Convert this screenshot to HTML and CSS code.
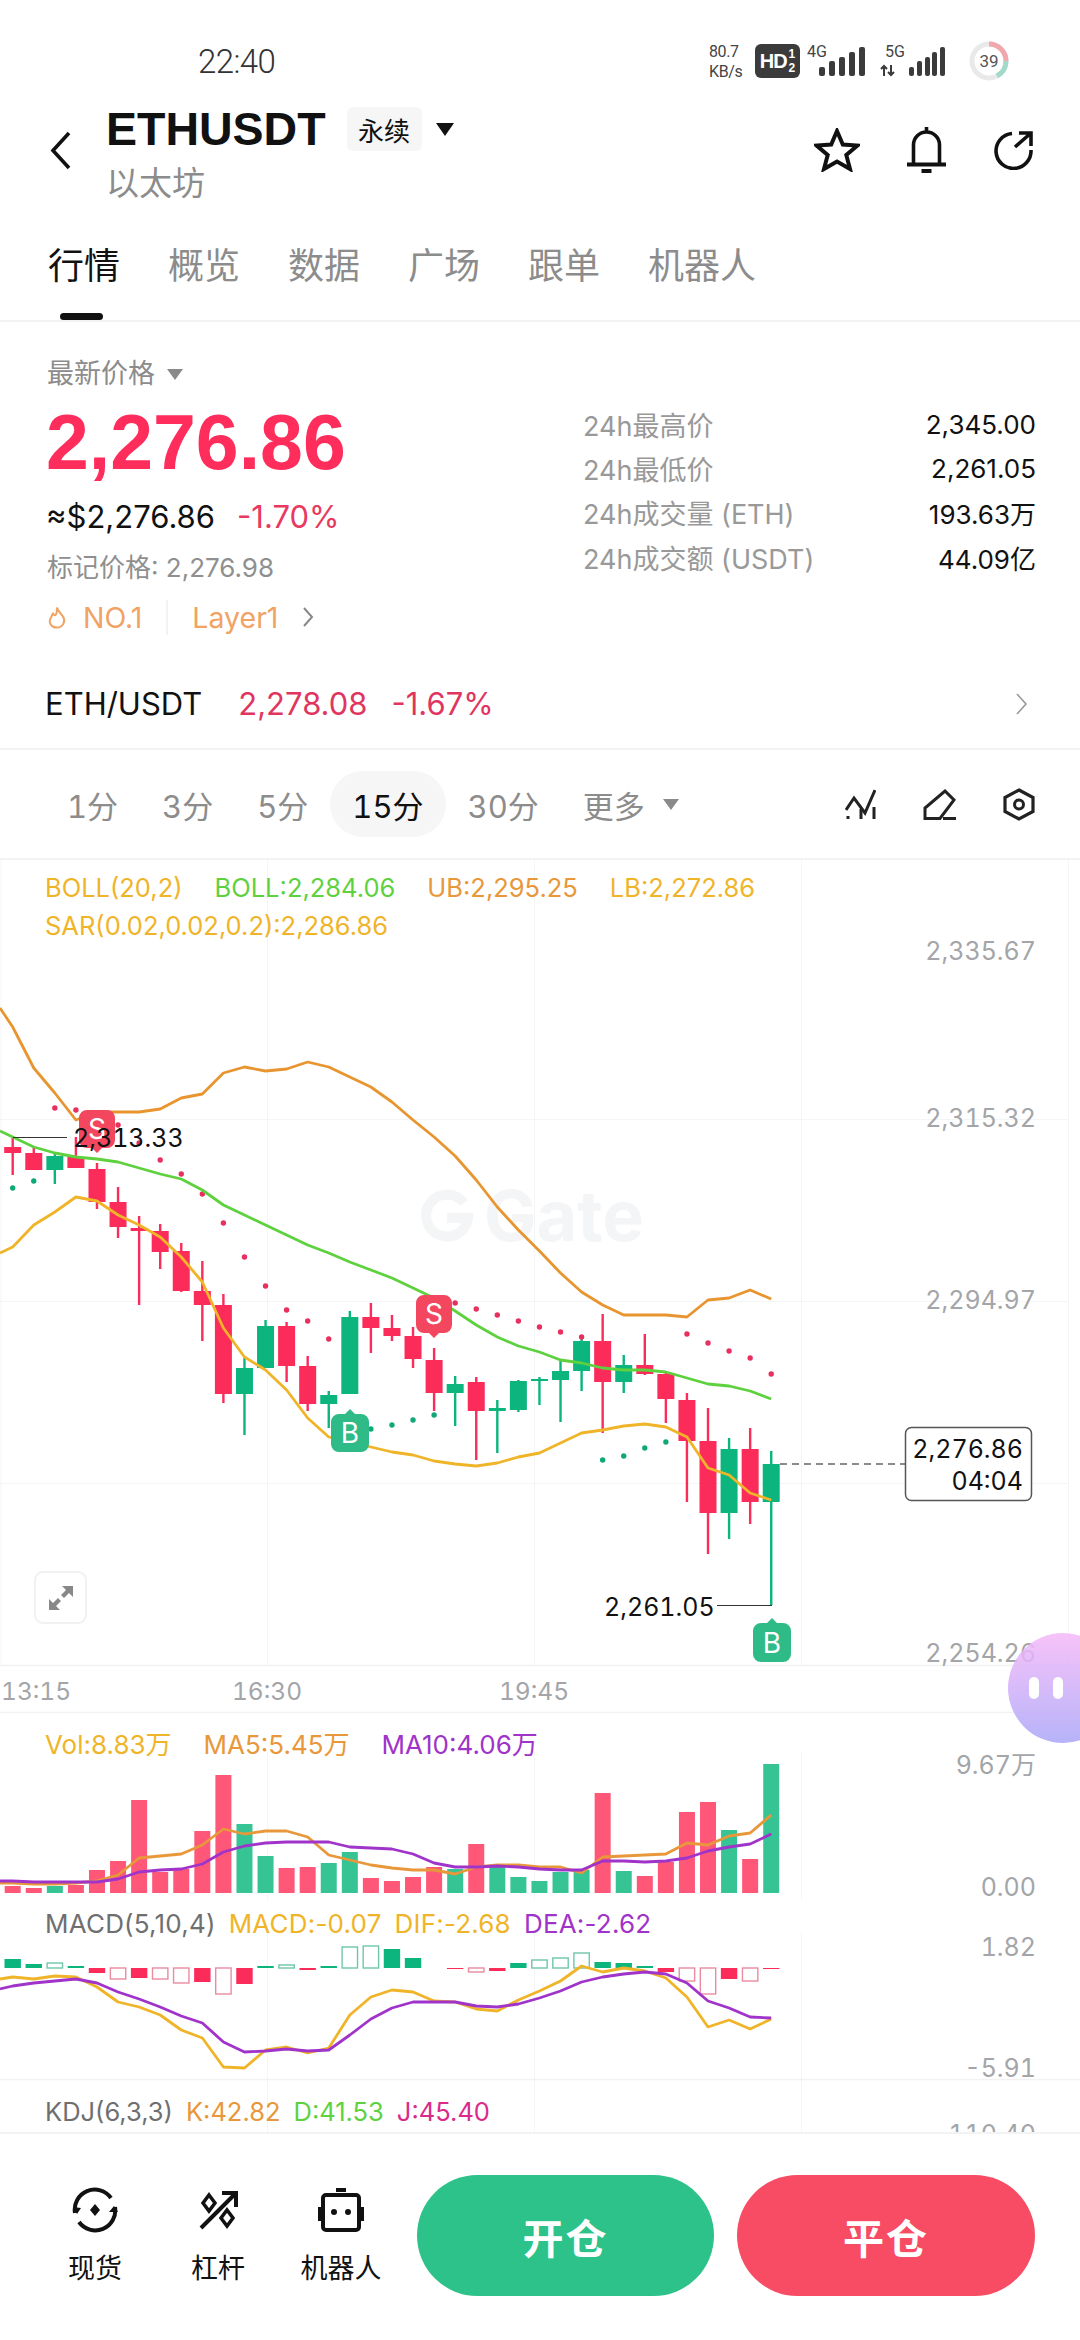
FILE: index.html
```html
<!DOCTYPE html>
<html lang="zh">

<head>
    <meta charset="UTF-8">
    <meta name="viewport" content="width=device-width, initial-scale=1.0">
    <title>ETHUSDT</title>
    <link rel="stylesheet" href="styles.css">
</head>

<body>
    <div class="page">
        <div class="status">
            <div class="time">22:40</div>
            <div class="status-right">
                <div class="speed"><span>80.7</span><span>KB/s</span></div>
                <div class="hd">HD<span class="hd-frac"><span>1</span><span>2</span></span></div>
                <svg class="sig-4g" width="59" height="36" viewBox="0 0 59 36">
                    <text x="0" y="14" class="sig-text">4G</text>
                    <rect x="12" y="24" width="6" height="9" rx="2"/>
                    <rect x="22" y="18" width="6" height="15" rx="2"/>
                    <rect x="32" y="14" width="6" height="19" rx="2"/>
                    <rect x="42" y="9" width="6" height="24" rx="2"/>
                    <rect x="52" y="4" width="6" height="29" rx="2"/>
                </svg>
                <svg class="sig-5g" width="65" height="36" viewBox="0 0 65 36">
                    <text x="5" y="14" class="sig-text">5G</text>
                    <path d="M4 33V23M1 26l3-3 3 3M11 22v10M8 29l3 3 3-3" fill="none" stroke="#3b3b3b" stroke-width="2"/>
                    <rect x="29" y="24" width="5" height="9" rx="2"/>
                    <rect x="37" y="18" width="5" height="15" rx="2"/>
                    <rect x="45" y="14" width="5" height="19" rx="2"/>
                    <rect x="52" y="9" width="5" height="24" rx="2"/>
                    <rect x="60" y="4" width="5" height="29" rx="2"/>
                </svg>
                <svg class="battery" width="40" height="40" viewBox="0 0 40 40">
                    <circle cx="20" cy="20" r="17" fill="none" stroke="#e9e9e9" stroke-width="5"/>
                    <path d="M20 3A17 17 0 0 1 37 20" fill="none" stroke="#f2a7ad" stroke-width="5"/>
                    <path d="M37 20A17 17 0 0 1 28 35" fill="none" stroke="#a3d9cb" stroke-width="5"/>
                    <text x="20" y="26" class="battery-text">39</text>
                </svg>
            </div>
        </div>

        <div class="header">
            <svg class="back" width="21" height="39" viewBox="0 0 21 39">
                <path d="M19 2L3 19.5 19 37" fill="none" stroke="#111" stroke-width="3.6"/>
            </svg>
            <div class="title-block">
                <div class="title-line">
                    <span class="symbol">ETHUSDT</span>
                    <span class="tag">永续</span>
                    <span class="tri tri-black"></span>
                </div>
                <div class="subtitle">以太坊</div>
            </div>
            <div class="actions">
                <svg width="46" height="44" viewBox="0 0 46 44">
                    <path d="M23 3L28.8 16.5 43.5 17.5 32.3 27 36 41 23 33.5 10 41 13.7 27 2.5 17.5 17.2 16.5Z" fill="none" stroke="#111" stroke-width="4"/>
                </svg>
                <svg width="41" height="46" viewBox="0 0 41 46">
                    <path d="M20.5 0v5M7.5 36V18a13 13 0 0 1 26 0v18" fill="none" stroke="#111" stroke-width="3.6"/>
                    <path d="M1 37.5h39" stroke="#111" stroke-width="4"/>
                    <rect x="15.5" y="42" width="10" height="4" fill="#111"/>
                </svg>
                <svg width="41" height="40" viewBox="0 0 41 40">
                    <path d="M19 3.5A17.5 17.5 0 1 0 38 20" fill="none" stroke="#111" stroke-width="3.6"/>
                    <path d="M22 17L38 3M26 3h12v13" fill="none" stroke="#111" stroke-width="3.6"/>
                </svg>
            </div>
        </div>

        <div class="tabs">
            <div class="tab tab-active">行情</div>
            <div class="tab">概览</div>
            <div class="tab">数据</div>
            <div class="tab">广场</div>
            <div class="tab">跟单</div>
            <div class="tab">机器人</div>
        </div>

        <div class="price-panel">
            <div class="price-left">
                <div class="price-label">最新价格<span class="tri tri-grey"></span></div>
                <div class="price-big">2,276.86</div>
                <div class="price-usd">≈$2,276.86<span class="price-change">-1.70%</span></div>
                <div class="price-mark">标记价格: 2,276.98</div>
                <div class="price-tags">
                    <svg width="20" height="23" viewBox="0 0 20 23">
                        <path d="M10 1.5C11 5.5 14 7.5 16 10.5 19 15.5 16 21.5 10 21.5 4 21.5 1 16.5 4 11.5 5 9.5 5 8.5 6 7.5 7 9.5 8 9.5 9 8.5 10 6.5 10 3.5 10 1.5Z" fill="none" stroke="#f0a364" stroke-width="2"/>
                    </svg>
                    <span class="tag-no">NO.1</span>
                    <span class="tag-layer">Layer1</span>
                    <svg width="12" height="20" viewBox="0 0 12 20">
                        <path d="M2 1l8 9-8 9" fill="none" stroke="#888" stroke-width="2"/>
                    </svg>
                </div>
            </div>
            <div class="price-right">
                <div class="stat"><span class="stat-name">24h最高价</span><span class="stat-val">2,345.00</span></div>
                <div class="stat"><span class="stat-name">24h最低价</span><span class="stat-val">2,261.05</span></div>
                <div class="stat"><span class="stat-name">24h成交量 (ETH)</span><span class="stat-val">193.63万</span></div>
                <div class="stat"><span class="stat-name">24h成交额 (USDT)</span><span class="stat-val">44.09亿</span></div>
            </div>
        </div>

        <div class="spot-row">
            <span class="spot-name">ETH/USDT</span>
            <span class="spot-price">2,278.08</span>
            <span class="spot-change">-1.67%</span>
            <svg class="spot-arrow" width="13" height="22" viewBox="0 0 13 22">
                <path d="M2 1l9 10-9 10" fill="none" stroke="#999" stroke-width="1.6"/>
            </svg>
        </div>

        <div class="tools">
            <div class="tf">1分</div>
            <div class="tf">3分</div>
            <div class="tf">5分</div>
            <div class="tf tf-active">15分</div>
            <div class="tf">30分</div>
            <div class="tf tf-more">更多<span class="tri tri-grey"></span></div>
            <div class="tool-icons">
                <svg width="31" height="30" viewBox="0 0 31 30">
                    <path d="M1 21L9 9l11 15L30 1" fill="none" stroke="#222" stroke-width="3"/>
                    <path d="M3 27v3M16 20v10M29 18v12" stroke="#222" stroke-width="3"/>
                </svg>
                <svg width="33" height="31" viewBox="0 0 33 31">
                    <path d="M2 29.5V19L22 2l9 9-14 18.5ZM20 29.5h13" fill="none" stroke="#222" stroke-width="3"/>
                </svg>
                <svg width="32" height="33" viewBox="0 0 32 33">
                    <path d="M16 2L30 9.5V23.5L16 31 2 23.5V9.5Z" fill="none" stroke="#222" stroke-width="3.2"/>
                    <circle cx="16" cy="16.5" r="4.5" fill="none" stroke="#222" stroke-width="3"/>
                </svg>
            </div>
        </div>

        <div class="chart">
            <svg id="chart-svg" class="chart-svg" width="1080" height="1272" viewBox="0 860 1080 1272">
                <g class="grid">
                    <path d="M1 860V1665M267.5 860V1665M534.5 860V1665M801.5 860V1665M1068.5 860V1665"/>
                    <path d="M0 1119.5H1068M0 1301.5H1068M0 1483.5H1068"/>
                    <path d="M267.5 1752V1900M534.5 1752V1900M801.5 1752V1900M267.5 1933V2132M534.5 1933V2132M801.5 1933V2132"/>
                    <path class="grid-strong" d="M0 1665.5H1080M0 1712.5H1080M0 2079.5H1080"/>
                </g>
                <g class="watermark">
                    <path d="M464 1203A21 21 0 1 0 468 1218H447" fill="none" stroke="#f3f5f6" stroke-width="10"/>
                    <text x="484" y="1241" class="watermark-text">Gate</text>
                </g>
                <g id="plot"></g>
                <g class="axis">
                    <text x="1036" y="960">2,335.67</text>
                    <text x="1036" y="1127">2,315.32</text>
                    <text x="1036" y="1309">2,294.97</text>
                    <text x="1036" y="1662">2,254.26</text>
                    <text x="1036" y="1774">9.67万</text>
                    <text x="1036" y="1896">0.00</text>
                    <text x="1036" y="1956">1.82</text>
                    <text x="1036" y="2077">-5.91</text>
                    <text x="1036" y="2143">110.40</text>
                </g>
                <g class="axis-time">
                    <text x="1" y="1700" class="axis-first">13:15</text>
                    <text x="267" y="1700">16:30</text>
                    <text x="534" y="1700">19:45</text>
                </g>
                <g class="badge-sell">
                    <path d="M87 1110h20a8 8 0 0 1 8 8v22a8 8 0 0 1-8 8h-5l-5 5-5-5h-5a8 8 0 0 1-8-8v-22a8 8 0 0 1 8-8Z"/>
                    <text x="97" y="1139">S</text>
                    <path d="M424 1295h20a8 8 0 0 1 8 8v22a8 8 0 0 1-8 8h-5l-5 5-5-5h-5a8 8 0 0 1-8-8v-22a8 8 0 0 1 8-8Z"/>
                    <text x="434" y="1324">S</text>
                </g>
                <g class="badge-buy">
                    <path d="M339 1414h6l5-5 5 5h6a8 8 0 0 1 8 8v22a8 8 0 0 1-8 8h-22a8 8 0 0 1-8-8v-22a8 8 0 0 1 8-8Z"/>
                    <text x="350" y="1443">B</text>
                    <path d="M761 1623h6l5-5 5 5h6a8 8 0 0 1 8 8v23a8 8 0 0 1-8 8h-22a8 8 0 0 1-8-8v-23a8 8 0 0 1 8-8Z"/>
                    <text x="772" y="1653">B</text>
                </g>
                <g class="extreme">
                    <path d="M13 1137.5H67M717 1605.5H772"/>
                    <text x="73" y="1147">2,313.33</text>
                    <text x="604" y="1616">2,261.05</text>
                </g>
                <g class="last-price">
                    <path class="last-dash" d="M780 1464H905"/>
                    <rect x="905.5" y="1427.5" width="126" height="73" rx="6"/>
                    <text x="1023" y="1458">2,276.86</text>
                    <text x="1023" y="1490">04:04</text>
                </g>
            </svg>

            <div class="pane pane-main">
                <div class="legend legend-boll">
                    <span class="c-yellow">BOLL(20,2)</span>
                    <span class="c-green">BOLL:2,284.06</span>
                    <span class="c-orange">UB:2,295.25</span>
                    <span class="c-yellow">LB:2,272.86</span>
                </div>
                <div class="legend legend-boll">
                    <span class="c-yellow">SAR(0.02,0.02,0.2):2,286.86</span>
                </div>
                <div class="expand">
                    <svg width="26" height="26" viewBox="0 0 26 26">
                        <path d="M14 1h11v11l-4-4-5 5-3-3 5-5ZM12 25H1V14l4 4 5-5 3 3-5 5Z" fill="#888"/>
                    </svg>
                </div>
            </div>
            <div class="pane pane-time"></div>
            <div class="pane pane-vol">
                <div class="legend">
                    <span class="c-yellow">Vol:8.83万</span>
                    <span class="c-orange">MA5:5.45万</span>
                    <span class="c-purple">MA10:4.06万</span>
                </div>
            </div>
            <div class="pane pane-macd">
                <div class="legend legend-macd">
                    <span class="c-grey">MACD(5,10,4)</span>
                    <span class="c-yellow">MACD:-0.07</span>
                    <span class="c-yellow">DIF:-2.68</span>
                    <span class="c-purple">DEA:-2.62</span>
                </div>
            </div>
            <div class="pane pane-kdj">
                <div class="legend legend-kdj">
                    <span class="c-grey">KDJ(6,3,3)</span>
                    <span class="c-orange">K:42.82</span>
                    <span class="c-green">D:41.53</span>
                    <span class="c-pink">J:45.40</span>
                </div>
            </div>
        </div>

        <div class="bottom-bar">
            <div class="bar-item">
                <div class="bar-icon">
                    <svg width="46" height="46" viewBox="0 0 46 46">
                        <path d="M3 26A20 20 0 0 1 39 11M43 20A20 20 0 0 1 7 35" fill="none" stroke="#111" stroke-width="4"/>
                        <path d="M23 17l5 6-5 6-5-6ZM1 20l4 7 4-6ZM37 25l5-6 4 6Z" fill="#111"/>
                    </svg>
                </div>
                <div class="bar-label">现货</div>
            </div>
            <div class="bar-item">
                <div class="bar-icon">
                    <svg width="40" height="40" viewBox="0 0 40 40">
                        <path d="M3 38L37 4M24 3h14v14" fill="none" stroke="#111" stroke-width="4"/>
                        <path d="M11 5l6 8-6 8-6-8ZM29 20l6 8-6 8-6-8Z" fill="none" stroke="#111" stroke-width="3.5"/>
                    </svg>
                </div>
                <div class="bar-label">杠杆</div>
            </div>
            <div class="bar-item">
                <div class="bar-icon">
                    <svg width="46" height="44" viewBox="0 0 46 44">
                        <rect x="18" y="0" width="10" height="4" fill="#111"/>
                        <rect x="5" y="7" width="36" height="35" rx="3" fill="none" stroke="#111" stroke-width="4"/>
                        <path d="M1.5 19v14M44.5 19v14" stroke="#111" stroke-width="3"/>
                        <circle cx="16" cy="24" r="3" fill="#111"/>
                        <circle cx="30" cy="24" r="3" fill="#111"/>
                    </svg>
                </div>
                <div class="bar-label">机器人</div>
            </div>
            <div class="btn btn-open">开仓</div>
            <div class="btn btn-close">平仓</div>
        </div>

        <div class="bubble"><span></span><span></span></div>
    </div>

    <script src="chart.js"></script>
</body>

</html>
```

FILE: styles.css
```css
body {
    font-family: Inter, "Noto Sans CJK SC", sans-serif;
    margin: 0;
    padding: 0;
    background-color: #fff;
}

.page {
    position: relative;
    width: 1080px;
    height: 2340px;
    overflow: hidden;
    background-color: #fff;
}

/* status bar */
.status {
    display: flex;
    justify-content: space-between;
    align-items: center;
    box-sizing: border-box;
    height: 90px;
    padding: 32px 71px 0 198px;
}

.time {
    font-family: Roboto, sans-serif;
    font-weight: 300;
    font-size: 33px;
    letter-spacing: -0.6px;
    color: #333;
}

.status-right {
    display: flex;
    align-items: center;
}

.speed {
    display: flex;
    flex-direction: column;
    gap: 5px;
    width: 35px;
    font-family: Roboto, sans-serif;
    font-size: 16px;
    line-height: 15px;
    letter-spacing: -0.4px;
    color: #444;
}

.hd {
    display: flex;
    align-items: center;
    justify-content: center;
    width: 45px;
    height: 34px;
    margin-left: 11px;
    border-radius: 6px;
    background-color: #3b3b3b;
    font-family: "Liberation Sans", sans-serif;
    font-weight: bold;
    font-size: 20px;
    letter-spacing: -1px;
    color: #fff;
}

.hd-frac {
    display: flex;
    flex-direction: column;
    margin-left: 2px;
    font-size: 12px;
    line-height: 14px;
    letter-spacing: 0;
}

.sig-4g,
.sig-5g {
    fill: #3b3b3b;
}

.sig-4g {
    margin-left: 7px;
}

.sig-5g {
    margin-left: 14px;
}

.sig-text {
    font-family: Roboto, sans-serif;
    font-size: 16px;
    fill: #444;
}

.battery {
    margin-left: 24px;
}

.battery-text {
    font-family: Roboto, sans-serif;
    font-size: 17px;
    text-anchor: middle;
    fill: #555;
}

/* header */
.header {
    display: flex;
    box-sizing: border-box;
    height: 145px;
    padding: 0 46px 0 50px;
}

.back {
    margin-top: 41px;
}

.title-block {
    margin: 17px 0 0 35px;
}

.title-line {
    display: flex;
    align-items: center;
    height: 44px;
}

.symbol {
    font-family: "Liberation Sans", sans-serif;
    font-weight: bold;
    font-size: 46.5px;
    color: #111;
}

.tag {
    display: flex;
    align-items: center;
    justify-content: center;
    width: 75px;
    height: 44px;
    margin-left: 21px;
    border-radius: 6px;
    background-color: #f6f6f6;
    font-size: 26px;
    color: #111;
}

.tri {
    display: inline-block;
    width: 0;
    height: 0;
    border-style: solid;
    border-color: transparent;
}

.tri-black {
    margin-left: 14px;
    border-width: 13px 9px 0 9px;
    border-top-color: #111;
}

.tri-grey {
    margin-left: 12px;
    border-width: 11px 8px 0 8px;
    border-top-color: #8a8a8a;
}

.subtitle {
    margin-top: 10px;
    font-size: 33px;
    line-height: 44px;
    color: #8c8c8c;
}

.actions {
    display: flex;
    align-items: center;
    gap: 46px;
    height: 46px;
    margin: 37px 0 0 auto;
}

/* tabs */
.tabs {
    display: flex;
    gap: 48px;
    box-sizing: border-box;
    height: 87px;
    padding: 7px 0 0 48px;
    border-bottom: 2px solid #f3f3f3;
}

.tab {
    position: relative;
    font-size: 36px;
    line-height: 48px;
    color: #8c8c8c;
}

.tab-active {
    color: #111;
}

.tab-active::after {
    content: "";
    position: absolute;
    left: 12px;
    top: 71px;
    width: 43px;
    height: 7px;
    border-radius: 4px;
    background-color: #111;
}

/* price panel */
.price-panel {
    display: flex;
    justify-content: space-between;
    box-sizing: border-box;
    height: 337px;
    padding: 34px 44px 0 46px;
}

.price-label {
    display: flex;
    align-items: center;
    margin-left: 1px;
    font-size: 27px;
    line-height: 36px;
    color: #8c8c8c;
}

.price-big {
    margin-top: 12px;
    font-family: "Liberation Sans", sans-serif;
    font-weight: bold;
    font-size: 77px;
    line-height: 76px;
    color: #ff2d5c;
}

.price-usd {
    margin-top: 19px;
    font-size: 31px;
    line-height: 36px;
    color: #111;
}

.price-change {
    margin-left: 22px;
    color: #e8395f;
}

.price-mark {
    margin: 15px 0 0 1px;
    font-size: 26px;
    line-height: 36px;
    color: #8f8f8f;
}

.price-tags {
    display: flex;
    align-items: center;
    height: 36px;
    margin: 13px 0 0 1px;
    font-size: 28.5px;
    color: #f0a364;
}

.tag-no {
    margin-left: 16px;
    padding-right: 24px;
    border-right: 2px solid #f3f3f3;
}

.tag-layer {
    margin: 0 24px;
}

.price-right {
    width: 453px;
    margin-top: 46px;
}

.stat {
    display: flex;
    justify-content: space-between;
    align-items: center;
    height: 44.3px;
}

.stat-name {
    font-size: 27px;
    color: #999;
}

.stat-val {
    font-size: 26px;
    color: #111;
}

/* spot row */
.spot-row {
    display: flex;
    align-items: center;
    box-sizing: border-box;
    height: 91px;
    padding: 0 52px 0 45px;
    border-bottom: 2px solid #f3f3f3;
    font-size: 31px;
}

.spot-name {
    color: #111;
}

.spot-price {
    margin-left: 36px;
    color: #e0355f;
}

.spot-change {
    margin-left: 24px;
    color: #e0355f;
}

.spot-arrow {
    margin-left: auto;
}

/* timeframe row */
.tools {
    display: flex;
    align-items: center;
    box-sizing: border-box;
    height: 110px;
    padding: 0 45px;
    border-bottom: 2px solid #f3f3f3;
}

.tf {
    display: flex;
    align-items: center;
    height: 66px;
    padding: 0 22px;
    border-radius: 33px;
    font-size: 31px;
    font-feature-settings: "tnum";
    color: #8c8c8c;
}

.tf-active {
    background-color: #f6f6f6;
    color: #111;
}

.tf-more .tri-grey {
    margin-left: 18px;
}

.tool-icons {
    display: flex;
    align-items: center;
    gap: 47px;
    margin-left: auto;
}

/* chart */
.chart {
    position: relative;
    height: 1272px;
    overflow: hidden;
}

.chart-svg {
    position: absolute;
    left: 0;
    top: 0;
    font-family: Inter, "Noto Sans CJK SC", sans-serif;
}

.grid path {
    fill: none;
    stroke: #f4f5f6;
    stroke-width: 1;
}

.grid .grid-strong {
    stroke: #f2f2f2;
    stroke-width: 1.5;
}

.watermark-text {
    font-weight: bold;
    font-size: 70px;
    fill: #f3f5f6;
}

.axis text {
    font-size: 25px;
    font-feature-settings: "tnum";
    text-anchor: end;
    fill: #a3a5a8;
}

.axis-time text {
    font-size: 24.5px;
    font-feature-settings: "tnum";
    text-anchor: middle;
    fill: #a3a5a8;
}

.axis-time .axis-first {
    text-anchor: start;
}

.badge-sell path {
    fill: #f2475f;
}

.badge-buy path {
    fill: #2fbb88;
}

.badge-sell text,
.badge-buy text {
    font-size: 28px;
    text-anchor: middle;
    fill: #fff;
}

.extreme path {
    fill: none;
    stroke: #333;
    stroke-width: 1.2;
}

.extreme text,
.last-price text {
    font-size: 25px;
    font-feature-settings: "tnum";
    fill: #111;
}

.last-price text {
    text-anchor: end;
}

.last-price rect {
    fill: #fff;
    stroke: #555;
    stroke-width: 1.5;
}

.last-dash {
    fill: none;
    stroke: #666;
    stroke-width: 1.5;
    stroke-dasharray: 7 5;
}

.pane {
    position: relative;
    box-sizing: border-box;
    padding-left: 45px;
}

.pane-main {
    height: 805px;
    padding-top: 9px;
}

.pane-time {
    height: 47px;
}

.pane-vol {
    height: 188px;
    padding-top: 14px;
}

.pane-macd {
    height: 180px;
    padding-top: 5px;
}

.pane-kdj {
    height: 52px;
    padding-top: 13px;
}

.legend {
    display: flex;
    gap: 32px;
    font-size: 26px;
    line-height: 38px;
    white-space: nowrap;
}

.legend-boll {
    font-size: 25.5px;
}

.legend-macd {
    gap: 13px;
    letter-spacing: 0.2px;
}

.legend-kdj {
    gap: 13px;
    font-size: 25.5px;
}

.c-yellow {
    color: #f0b429;
}

.c-green {
    color: #5ed13f;
}

.c-orange {
    color: #e8973a;
}

.c-purple {
    color: #a033c9;
}

.c-grey {
    color: #6f6f6f;
}

.c-pink {
    color: #d92b8c;
}

.expand {
    position: absolute;
    left: 34px;
    top: 711px;
    display: flex;
    align-items: center;
    justify-content: center;
    box-sizing: border-box;
    width: 53px;
    height: 53px;
    border: 2px solid #f1f1f1;
    border-radius: 9px;
    background-color: #fff;
}

/* bottom bar */
.bottom-bar {
    display: flex;
    align-items: flex-start;
    box-sizing: border-box;
    height: 208px;
    padding-left: 50px;
    border-top: 2px solid #f3f3f3;
    background-color: #fff;
}

.bar-item {
    display: flex;
    flex-direction: column;
    align-items: center;
    width: 90px;
    margin-top: 53px;
    margin-right: 33px;
}

.bar-item:nth-child(3) {
    margin-right: 31px;
}

.bar-icon {
    display: flex;
    align-items: center;
    justify-content: center;
    height: 46px;
}

.bar-label {
    margin-top: 19px;
    font-size: 27px;
    line-height: 34px;
    color: #111;
}

.btn {
    display: flex;
    align-items: center;
    justify-content: center;
    width: 297px;
    height: 121px;
    margin-top: 41px;
    border-radius: 61px;
    font-weight: bold;
    font-size: 41px;
    letter-spacing: 2px;
    color: #fff;
}

.btn-open {
    background-color: #2dc289;
}

.btn-close {
    width: 298px;
    margin-left: 23px;
    background-color: #f74c63;
}

.bubble {
    position: absolute;
    left: 1008px;
    top: 1633px;
    display: flex;
    align-items: center;
    gap: 14px;
    box-sizing: border-box;
    width: 110px;
    height: 110px;
    padding: 0 0 0 21px;
    border-radius: 50%;
    background: linear-gradient(#f6b9f8, #aaa6f9);
    opacity: 0.85;
}

.bubble span {
    width: 10px;
    height: 22px;
    border-radius: 5px;
    background-color: #fff;
}
```

FILE: chart.js
```js
// x position of candle i
function cx(i) {
    return 12.7 + 21.07 * i;
}

var RED = '#fb2c5a';
var GREEN = '#0bb57d';

// [up, wick top, body top, body bottom, wick bottom]
var candles = [
    [0, 1137, 1147, 1153, 1175], [0, 1147, 1153, 1170, 1170], [1, 1153, 1156, 1170, 1184], [0, 1137, 1157, 1168, 1168],
    [0, 1163, 1169, 1202, 1209], [0, 1187, 1202, 1227, 1238], [0, 1216, 1228, 1231, 1305], [0, 1224, 1231, 1252, 1269],
    [0, 1243, 1251, 1291, 1292], [0, 1261, 1291, 1305, 1341], [0, 1294, 1305, 1394, 1403], [1, 1358, 1368, 1394, 1435],
    [1, 1320, 1326, 1368, 1368], [0, 1322, 1326, 1366, 1382], [0, 1356, 1366, 1404, 1411], [1, 1391, 1395, 1404, 1428],
    [1, 1311, 1317, 1394, 1394], [0, 1303, 1317, 1328, 1353], [0, 1315, 1328, 1336, 1341], [0, 1327, 1336, 1359, 1368],
    [0, 1348, 1360, 1393, 1411], [1, 1376, 1384, 1393, 1426], [0, 1377, 1382, 1411, 1460], [1, 1400, 1408, 1411, 1453],
    [1, 1380, 1381, 1410, 1412], [1, 1377, 1379, 1381, 1405], [1, 1361, 1371, 1380, 1422], [1, 1335, 1341, 1371, 1391],
    [0, 1314, 1341, 1382, 1433], [1, 1355, 1365, 1382, 1393], [0, 1334, 1365, 1374, 1375], [0, 1372, 1374, 1399, 1423],
    [0, 1393, 1400, 1441, 1502], [0, 1408, 1441, 1513, 1554], [1, 1438, 1449, 1513, 1539], [0, 1428, 1449, 1502, 1524],
    [1, 1451, 1464, 1502, 1605]
];

// line values per candle, first number is the value at x = 0
var upper = [1008, 1027, 1068, 1093, 1120, 1112, 1112, 1112, 1109, 1098, 1094, 1073, 1067, 1071, 1069, 1062, 1067, 1077, 1087, 1102, 1120, 1137, 1156, 1180, 1207, 1230, 1251, 1273, 1292, 1305, 1315, 1315, 1315, 1317, 1300, 1298, 1290, 1299];
var middle = [1131, 1137, 1147, 1153, 1157, 1159, 1162, 1168, 1174, 1179, 1190, 1205, 1215, 1225, 1235, 1245, 1253, 1262, 1270, 1278, 1288, 1298, 1311, 1325, 1337, 1346, 1352, 1360, 1363, 1368, 1370, 1370, 1372, 1378, 1384, 1386, 1391, 1399];
var lower = [1253, 1247, 1225, 1212, 1197, 1201, 1215, 1225, 1237, 1257, 1282, 1328, 1357, 1370, 1390, 1418, 1437, 1442, 1447, 1452, 1455, 1461, 1464, 1466, 1463, 1457, 1453, 1443, 1433, 1430, 1426, 1424, 1427, 1437, 1468, 1475, 1493, 1500];

// [candle, y]
var sarRed = [[2, 1108], [3, 1110], [5, 1125], [6, 1143], [7, 1160], [8, 1174], [9, 1194], [10, 1223], [11, 1257], [12, 1286], [13, 1310], [14, 1321], [15, 1339],
    [21, 1303], [22, 1309], [23, 1315], [24, 1321], [25, 1327], [26, 1332], [27, 1337], [32, 1334], [33, 1343], [34, 1351], [35, 1358], [36, 1374]];
var sarGreen = [[0, 1188], [1, 1181], [17, 1429], [18, 1425], [19, 1420], [20, 1415], [28, 1460], [29, 1456], [30, 1448], [31, 1442]];

// volume: [up, top]
var vol = [[0, 1886], [0, 1888], [1, 1886], [0, 1885], [0, 1870], [0, 1861], [0, 1800], [0, 1872], [0, 1869], [0, 1831], [0, 1775], [1, 1824], [1, 1856], [0, 1868], [0, 1867], [1, 1863], [1, 1852], [0, 1878], [0, 1881], [0, 1877], [0, 1867], [1, 1869], [0, 1844], [1, 1867], [1, 1877], [1, 1881], [1, 1872], [1, 1870], [0, 1793], [1, 1871], [0, 1876], [0, 1862], [0, 1812], [0, 1802], [1, 1830], [0, 1859], [1, 1764]];
var ma5 = [1883, 1883, 1884, 1884, 1883, 1881, 1875, 1858, 1856, 1854, 1845, 1829, 1834, 1831, 1831, 1837, 1855, 1860, 1865, 1868, 1870, 1870, 1874, 1867, 1865, 1865, 1867, 1867, 1873, 1857, 1856, 1855, 1854, 1843, 1845, 1836, 1833, 1815];
var ma10 = [1881, 1881, 1882, 1882, 1882, 1882, 1879, 1872, 1870, 1869, 1864, 1852, 1846, 1843, 1842, 1842, 1842, 1847, 1848, 1849, 1854, 1863, 1867, 1867, 1866, 1867, 1869, 1870, 1870, 1861, 1861, 1862, 1861, 1858, 1851, 1847, 1844, 1834];

// macd: [up, hollow, far end from the zero line]
var macd = [[1, 0, 1959], [1, 0, 1964], [1, 1, 1963], [1, 0, 1966], [0, 0, 1973], [0, 1, 1979], [0, 0, 1978], [0, 1, 1979], [0, 1, 1983], [0, 0, 1982], [0, 1, 1994], [0, 0, 1984],
    [1, 0, 1966], [1, 1, 1965], [0, 0, 1970], [1, 0, 1966], [1, 1, 1947], [1, 1, 1946], [1, 0, 1949], [1, 0, 1958], null, [0, 0, 1969], [0, 1, 1972], [0, 0, 1971],
    [1, 0, 1963], [1, 1, 1960], [1, 1, 1958], [1, 1, 1953], [1, 0, 1962], [1, 0, 1963], [1, 0, 1966], [0, 0, 1972], [0, 1, 1981], [0, 1, 1994], [0, 0, 1979], [0, 1, 1981], [0, 0, 1969]];
var dif = [1979, 1977, 1979, 1976, 1977, 1987, 2002, 2007, 2015, 2030, 2038, 2067, 2068, 2050, 2047, 2053, 2048, 2015, 1997, 1990, 1992, 2001, 2002, 2009, 2011, 2000, 1991, 1981, 1966, 1972, 1968, 1971, 1978, 1997, 2027, 2020, 2029, 2019];
var dea = [1989, 1986, 1983, 1981, 1979, 1983, 1992, 1999, 2007, 2016, 2023, 2042, 2052, 2051, 2049, 2051, 2050, 2035, 2019, 2008, 2002, 2002, 2002, 2006, 2007, 2004, 1998, 1991, 1982, 1977, 1974, 1972, 1974, 1983, 2001, 2008, 2017, 2018];

var plot = document.getElementById('plot');

function add(tag, attrs) {
    var el = document.createElementNS('http://www.w3.org/2000/svg', tag);
    for (var k in attrs) {
        el.setAttribute(k, attrs[k]);
    }
    plot.appendChild(el);
}

function line(values, color) {
    var pts = values.map(function (y, n) {
        return (n == 0 ? 0 : cx(n - 1)) + ',' + y;
    });
    add('polyline', { points: pts.join(' '), fill: 'none', stroke: color, 'stroke-width': 2.8, 'stroke-linejoin': 'round' });
}

candles.forEach(function (c, i) {
    var color = c[0] ? GREEN : RED;
    add('rect', { x: cx(i) - 1.2, y: c[1], width: 2.4, height: c[4] - c[1], fill: color });
    add('rect', { x: cx(i) - 8.5, y: c[2], width: 17, height: c[3] - c[2], fill: color });
});

sarRed.forEach(function (d) {
    add('circle', { cx: cx(d[0]), cy: d[1], r: 2.7, fill: '#e8305f' });
});
sarGreen.forEach(function (d) {
    add('circle', { cx: cx(d[0]), cy: d[1], r: 2.7, fill: '#10a878' });
});

line(upper, '#e8952f');
line(middle, '#5ed13f');
line(lower, '#f0b429');

vol.forEach(function (v, i) {
    add('rect', { x: cx(i) - 8, y: v[1], width: 16, height: 1893 - v[1], fill: v[0] ? '#36c494' : '#ff5777' });
});
line(ma5, '#e8973a');
line(ma10, '#a033c9');

macd.forEach(function (m, i) {
    if (!m) {
        return;
    }
    var top = m[0] ? m[2] : 1968;
    var h = m[0] ? 1968 - m[2] : m[2] - 1968;
    if (m[1]) {
        add('rect', { x: cx(i) - 7.7, y: top, width: 15.4, height: h, fill: '#fff', stroke: m[0] ? '#6fc7a8' : '#ea8ba0', 'stroke-width': 1.4 });
    } else {
        add('rect', { x: cx(i) - 8.2, y: top, width: 16.4, height: h, fill: m[0] ? GREEN : RED });
    }
});
line(dif, '#f0b429');
line(dea, '#a033c9');
```
